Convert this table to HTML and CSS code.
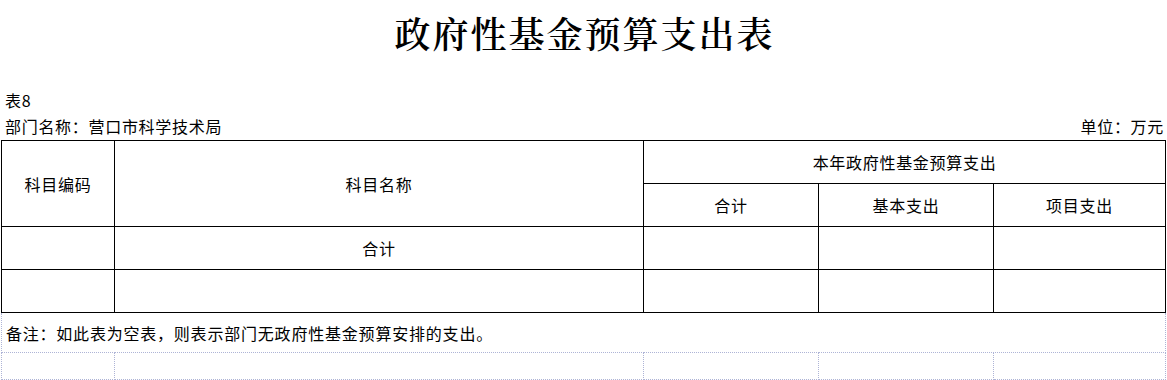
FILE: index.html
```html
<!DOCTYPE html>
<html lang="zh-CN">
<head>
<meta charset="utf-8">
<title>政府性基金预算支出表</title>
<link rel="stylesheet" href="styles.css">
</head>
<body>
<div class="page">
  <h1 class="title">政府性基金预算支出表</h1>
  <div class="meta">
    <div class="meta-line">表8</div>
    <div class="meta-line meta-split">
      <span>部门名称<span class="fw">：</span>营口市科学技术局</span>
      <span>单位<span class="fw">：</span>万元</span>
    </div>
  </div>
  <table class="grid">
    <colgroup>
      <col class="c1">
      <col class="c2">
      <col class="c3">
      <col class="c4">
      <col class="c5">
    </colgroup>
    <tr>
      <td rowspan="2">科目编码</td>
      <td rowspan="2">科目名称</td>
      <td colspan="3">本年政府性基金预算支出</td>
    </tr>
    <tr>
      <td>合计</td>
      <td>基本支出</td>
      <td>项目支出</td>
    </tr>
    <tr>
      <td></td>
      <td>合计</td>
      <td></td>
      <td></td>
      <td></td>
    </tr>
    <tr>
      <td></td>
      <td></td>
      <td></td>
      <td></td>
      <td></td>
    </tr>
    <tr class="note-row">
      <td colspan="5" class="note">备注<span class="fw">：</span>如此表为空表<span class="fw fw-left">，</span>则表示部门无政府性基金预算安排的支出<span class="fw fw-left">。</span></td>
    </tr>
    <tr class="faint-row">
      <td></td>
      <td></td>
      <td></td>
      <td></td>
      <td></td>
    </tr>
  </table>
</div>
</body>
</html>
```

FILE: styles.css
```css
html, body {
  margin: 0;
  padding: 0;
  background: #ffffff;
}

.page {
  width: 1167px;
  font-family: "Noto Sans CJK SC", "Liberation Sans", sans-serif;
  color: #000;
  font-size: 16px;
  letter-spacing: 0.7px;
}

.fw {
  display: inline-block;
  width: 1em;
  text-align: center;
  letter-spacing: 0;
  margin-right: 0.7px;
}

.fw-left {
  text-align: left;
}

.title {
  margin: 0;
  height: 88px;
  padding-top: 12px;
  padding-left: 2px;
  box-sizing: border-box;
  text-align: center;
  font-family: "Noto Serif CJK SC", "Liberation Serif", "Noto Sans CJK SC", serif;
  font-size: 36px;
  line-height: 42px;
  font-weight: 600;
  letter-spacing: 2px;
}

.meta {
  padding: 0 3px 0 5px;
}

.meta-line {
  height: 26px;
  line-height: 24px;
}

.meta-split {
  display: flex;
  justify-content: space-between;
  height: 26px;
}

.grid {
  margin-left: 1px;
  width: 1165px;
  border-collapse: collapse;
  table-layout: fixed;
}

.c1 { width: 113px; }
.c2 { width: 529px; }
.c3 { width: 175px; }
.c4 { width: 175px; }
.c5 { width: 172px; }

.grid td {
  border: 1px solid #000;
  height: 42px;
  padding: 0;
  text-align: center;
  vertical-align: middle;
  line-height: 20px;
}

.grid .note-row td {
  height: 39px;
  text-align: left;
  padding-left: 4px;
  font-size: 16px;
  letter-spacing: 0.8px;
  border-left: 1px dotted #aeb4d6;
  border-right: 1px dotted #aeb4d6;
  border-bottom: 1px dotted #aeb4d6;
}

.grid .faint-row td {
  height: 26px;
  border: 1px dotted #aeb4d6;
}
```
